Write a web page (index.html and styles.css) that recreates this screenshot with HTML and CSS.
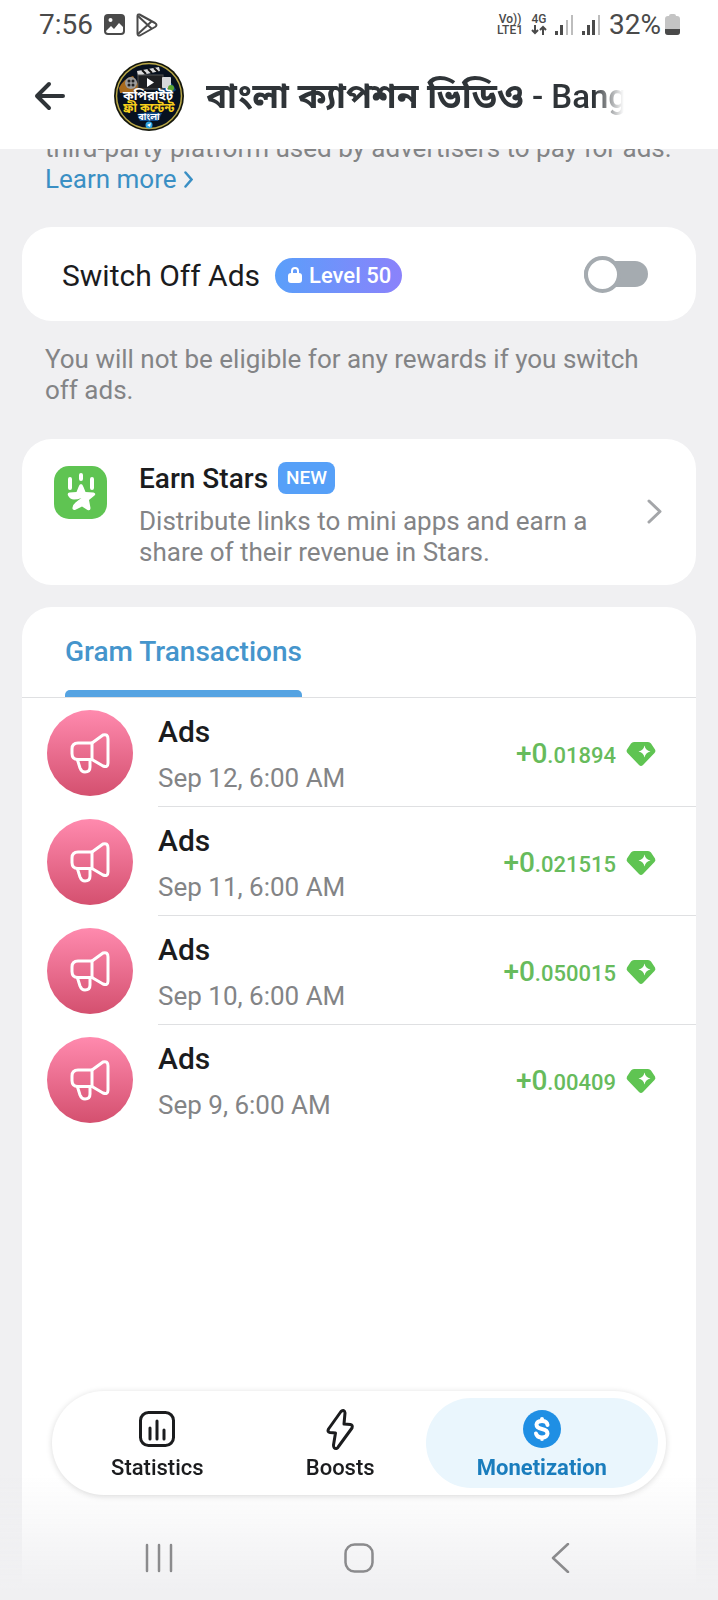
FILE: index.html
```html
<!DOCTYPE html>
<html lang="en">
<head>
  <meta charset="UTF-8">
  <meta name="viewport" content="width=device-width, initial-scale=1.0">
  <title>Channel Monetization</title>
  <link rel="stylesheet" href="styles.css">
</head>
<body>
  <!-- shared icons -->
  <svg class="defs" aria-hidden="true">
    <symbol id="megaphone" viewBox="0 0 86 86">
      <g fill="none" stroke="#fff" stroke-width="3" stroke-linejoin="round" stroke-linecap="round">
        <path d="M45 33H31q-6 0-6 6v4.500q0 6 6 6H45z"/>
        <path d="M45 33L56 25q5-1.500 5 4V53q0 5-5 3L45 49.500"/>
        <path d="M30.500 50L33 58q1.500 4 5 4 5 0 5-5V50"/>
      </g>
    </symbol>
    <symbol id="gem" viewBox="0 0 30 26">
      <path d="M8 1h14q2 0 3 1.500l4 6q1 2-.5 3.500L17 24q-2 2-4 0L1.500 12Q0 10.500 1 8.500l4-6Q6 1 8 1z" fill="#5fc452"/>
      <path d="M18.500 4.500q1 5 6 6-5 1-6 6-1-5-6-6 5-1 6-6z" fill="#fff"/>
    </symbol>
  </svg>

  <div class="top">
    <div class="status">
      <span class="clock">7:56</span>
      <svg width="21" height="21" viewBox="0 0 21 21">
        <rect width="21" height="21" rx="4" fill="#4a4a4a"/>
        <circle cx="6.500" cy="6" r="2" fill="#fff"/>
        <path d="M2 17l5-5 3 3 5-6 4 4v4q0 2-2 2H4q-2 0-2-2z" fill="#fff"/>
      </svg>
      <svg width="22" height="24" viewBox="0 0 22 24" fill="none" stroke="#4a4a4a" stroke-width="2" stroke-linejoin="round">
        <path d="M1.500 3q0-2 2-1.500L19 10q3 2 0 4L4 22.500q-2.500.5-2.500-2z"/>
        <path d="M2 3l14 13M2 21L16 8"/>
      </svg>
      <div class="status-right">
        <span class="net"><span>Vo))</span><span>LTE1</span></span>
        <span class="net">
          <span>4G</span>
          <svg width="16" height="10" viewBox="0 0 16 10" fill="none" stroke="#4a4a4a" stroke-width="2"><path d="M4 0v8M1 5l3 3 3-3M12 10V2M9 5l3-3 3 3"/></svg>
        </span>
        <svg class="signal" width="19" height="20" viewBox="0 0 19 20">
          <path d="M0 16h3v4H0zM5 10h3v10H5z" fill="#4a4a4a"/><path d="M11 5h2v15h-2zM16 0h2v20h-2z" fill="#bdbdbd"/>
        </svg>
        <svg class="signal" width="19" height="20" viewBox="0 0 19 20">
          <path d="M0 16h3v4H0zM5 10h3v10H5zM10 5h3v15h-3z" fill="#4a4a4a"/><path d="M16 0h2v20h-2z" fill="#bdbdbd"/>
        </svg>
        <span class="battery">32%
          <svg width="15" height="21" viewBox="0 0 15 21">
            <path d="M4 2q0-2 2-2h3q2 0 2 2h1q3 0 3 3v13q0 3-3 3H3q-3 0-3-3V5q0-3 3-3z" fill="#c4c4c4"/>
            <path d="M0 15h15v3q0 3-3 3H3q-3 0-3-3z" fill="#4a4a4a"/>
          </svg>
        </span>
      </div>
    </div>

    <header class="header">
      <button class="back" aria-label="Back">
        <svg width="32" height="30" viewBox="0 0 32 30" fill="none" stroke="#2f3438" stroke-width="4" stroke-linecap="round" stroke-linejoin="round"><path d="M29 15H3M15 3L3 15l12 12"/></svg>
      </button>
      <svg class="channel-photo" width="70" height="70" viewBox="0 0 70 70">
        <circle cx="35" cy="35" r="35" fill="#15170c"/>
        <circle cx="35" cy="35" r="32.500" fill="#07111f" stroke="#b9a848" stroke-width="1.500"/>
        <path d="M5 27q5-10 14-12l8 12-9 5H6z" fill="#a86a1c"/>
        <path d="M48 17q10 3 14 12l-5 4-12-2z" fill="#12467c"/>
        <path d="M23 53q12-3 25-1l-4 8H26z" fill="#124c8a"/>
        <path d="M23 10l22-4 1 4-22 5z" fill="#ddd"/>
        <path d="M28 9l4 4M34 8l4 4M40 7l4 4" stroke="#111" stroke-width="2"/>
        <rect x="24" y="14" width="25" height="14" fill="#1f2022" stroke="#555"/>
        <path d="M33 17v9l7-4.500z" fill="#fff"/>
        <circle cx="17" cy="22" r="6" fill="#9b9b9b"/>
        <g fill="#222"><circle cx="15" cy="20" r="1.500"/><circle cx="19" cy="20" r="1.500"/><circle cx="15" cy="24" r="1.500"/><circle cx="19" cy="24" r="1.500"/></g>
        <rect x="48" y="16" width="9" height="11" rx="1" fill="#d6d8da"/>
        <circle cx="57" cy="27" r="3" fill="#5aa832"/>
        <text x="34" y="39" class="photo-text" fill="#fff" font-size="13">কপিরাইট</text>
        <text x="35" y="51" class="photo-text" fill="#f7cf1b" font-size="12">ফ্রী কন্টেন্ট</text>
        <text x="35" y="59" class="photo-text" fill="#fff" font-size="9">বাংলা</text>
        <circle cx="35" cy="64" r="3.500" fill="#2ba3e0"/>
        <path d="M33 64l4-2-1 4z" fill="#fff"/>
      </svg>
      <h1 class="title"><b>বাংলা ক্যাপশন ভিডিও</b> - Bang</h1>
    </header>
  </div>

  <main class="content">
    <p class="note note-top">third-party platform used by advertisers to pay for ads.
      <a class="learn" href="#">Learn more <svg width="9" height="17" viewBox="0 0 9 17" fill="none" stroke="#3a8fc4" stroke-width="2.500" stroke-linecap="round"><path d="M1.500 1.500l6 7-6 7"/></svg></a>
    </p>

    <section class="card switch-card">
      <label for="adsOff">Switch Off Ads</label>
      <span class="level">
        <svg width="14" height="18" viewBox="0 0 14 18"><path d="M4 8V5q0-3 3-3t3 3v3" fill="none" stroke="#fff" stroke-width="2"/><rect y="7" width="14" height="10" rx="3" fill="#fff"/></svg>
        Level 50
      </span>
      <input class="switch" type="checkbox" id="adsOff">
    </section>

    <p class="note note-ads">You will not be eligible for any rewards if you switch off ads.</p>

    <a class="card earn" href="#">
      <svg class="earn-icon" width="53" height="53" viewBox="0 0 53 53">
        <rect width="53" height="53" rx="15" fill="#5fc452"/>
        <path d="M16 13v9M27 9v4M38 13v9" stroke="#fff" stroke-width="4" stroke-linecap="round"/>
        <path d="M27 18q1.500 0 2.500 3l2 5 8 .5q3 1 1 3L35 34l1.500 8q0 3-3 2L28 40.500 21 44q-3 .5-2.500-2.500.5-3 3-5 3-2.500 6-4.500-4 1.500-7.500 1.500-4 0-6-4-1-2.500 1.500-3l7-.5 2-5q1-3 2.500-3z" fill="#fff"/>
      </svg>
      <div class="earn-text">
        <h2>Earn Stars <span class="new">NEW</span></h2>
        <p>Distribute links to mini apps and earn a share of their revenue in Stars.</p>
      </div>
      <svg class="chevron" width="15" height="25" viewBox="0 0 15 25" fill="none" stroke="#a4a6a9" stroke-width="3" stroke-linecap="round" stroke-linejoin="round"><path d="M2 2l11 10.500L2 23"/></svg>
    </a>

    <section class="card transactions">
      <div class="tabs">
        <button class="tab">Gram Transactions</button>
      </div>
      <ul>
        <li>
          <svg class="ads-icon"><use href="#megaphone"/></svg>
          <div class="row">
            <div><h3>Ads</h3><time>Sep 12, 6:00 AM</time></div>
            <span class="amount">+0<small>.01894</small></span>
            <svg class="gem"><use href="#gem"/></svg>
          </div>
        </li>
        <li>
          <svg class="ads-icon"><use href="#megaphone"/></svg>
          <div class="row">
            <div><h3>Ads</h3><time>Sep 11, 6:00 AM</time></div>
            <span class="amount">+0<small>.021515</small></span>
            <svg class="gem"><use href="#gem"/></svg>
          </div>
        </li>
        <li>
          <svg class="ads-icon"><use href="#megaphone"/></svg>
          <div class="row">
            <div><h3>Ads</h3><time>Sep 10, 6:00 AM</time></div>
            <span class="amount">+0<small>.050015</small></span>
            <svg class="gem"><use href="#gem"/></svg>
          </div>
        </li>
        <li>
          <svg class="ads-icon"><use href="#megaphone"/></svg>
          <div class="row">
            <div><h3>Ads</h3><time>Sep 9, 6:00 AM</time></div>
            <span class="amount">+0<small>.00409</small></span>
            <svg class="gem"><use href="#gem"/></svg>
          </div>
        </li>
      </ul>
    </section>
  </main>

  <div class="bottom">
    <nav class="nav">
      <a href="#">
        <svg width="40" height="44" viewBox="0 0 40 44" fill="none" stroke="#1b1c1e" stroke-width="3" stroke-linecap="round"><rect x="3.500" y="5.500" width="33" height="33" rx="8"/><path d="M13 21v11M20 14v18M27 23v9"/></svg>
        Statistics
      </a>
      <a href="#">
        <svg width="40" height="44" viewBox="0 0 40 44" fill="none" stroke="#1b1c1e" stroke-width="3" stroke-linejoin="round"><path d="M21 4.500L8.500 22q-1.500 3 1.500 3.500l5.500.5-2 12q0 4 3 3.500 1.500-.5 2-2L32 21q1-3-1.500-3.500L24 17l1-11q-.5-4-4-1.500z"/></svg>
        Boosts
      </a>
      <a class="active" href="#">
        <svg width="40" height="44" viewBox="0 0 40 44"><circle cx="20" cy="22" r="19" fill="#1f8fe4"/><path d="M25.500 18q-.5-4-5.500-4t-5.500 3.500q0 3.500 5.500 4.500t5.500 4.500q-.5 4-5.500 4t-6-4M20 13v-1M20 31v1" fill="none" stroke="#fff" stroke-width="4" stroke-linecap="round"/></svg>
        Monetization
      </a>
    </nav>
    <div class="system">
      <button aria-label="Recents"><svg width="30" height="30" viewBox="0 0 30 30" fill="none" stroke="#8b8b8d" stroke-width="2.500" stroke-linecap="round"><path d="M3 2v26M15 2v26M27 2v26"/></svg></button>
      <button aria-label="Home"><svg width="30" height="30" viewBox="0 0 30 30" fill="none" stroke="#8b8b8d" stroke-width="2.500"><rect x="1.500" y="1.500" width="27" height="27" rx="9"/></svg></button>
      <button aria-label="Back"><svg width="30" height="30" viewBox="0 0 30 30" fill="none" stroke="#8b8b8d" stroke-width="2.500" stroke-linecap="round" stroke-linejoin="round"><path d="M24 1L9 15l15 14"/></svg></button>
    </div>
  </div>
</body>
</html>
```

FILE: styles.css
```css
* { box-sizing: border-box; }
body { margin: 0; min-height: 100vh; display: flex; flex-direction: column; background: #f0f0f2; color: #1b1c1e; font-family: Roboto, "Noto Sans Bengali", sans-serif; }
h1, h2, h3, p, ul { margin: 0; padding: 0; }
h1, h2, h3 { font-weight: 500; }
a { text-decoration: none; color: inherit; }
button { border: none; background: none; padding: 0; font: inherit; cursor: pointer; }
svg { display: block; flex: none; }
.defs { display: none; }

/* status bar and header */
.top { position: sticky; top: 0; z-index: 2; background: #fff; }
.status { display: flex; align-items: center; gap: 11px; height: 49px; padding: 0 38px 0 39px; color: #4a4a4a; font-size: 28px; line-height: 32px; }
.battery { display: flex; align-items: center; gap: 4px; }
.status-right { display: flex; align-items: center; gap: 8px; margin-left: auto; }
.net { display: flex; flex-direction: column; align-items: center; font-size: 12px; line-height: 11px; font-weight: 500; }
.header { display: flex; align-items: center; height: 100px; padding: 0 94px 6px 34px; }
.back { margin-right: 48px; }
.channel-photo { margin-right: 22px; }
.photo-text { font-family: "Noto Sans Bengali", Roboto, sans-serif; font-weight: 700; text-anchor: middle; }
.title { flex: 1; min-width: 0; padding-top: 2px; overflow: hidden; white-space: nowrap; font-size: 33px; line-height: 60px; color: #2f3438; -webkit-mask-image: linear-gradient(to left, transparent, #000 30px); mask-image: linear-gradient(to left, transparent, #000 30px); }
.title b { font-size: 35px; font-weight: 700; }

.content { flex: 1; display: flex; flex-direction: column; padding: 0 22px; }
.note { padding: 0 23px; color: #838486; font-size: 26px; line-height: 31px; }
.note-top { margin: -16px 0 32px; }
.note-ads { margin: 23px 0 33px; }
.learn { display: flex; align-items: center; gap: 7px; color: #3a8fc4; }
.card { background: #fff; border-radius: 30px; }

.switch-card { display: flex; align-items: center; height: 94px; padding: 2px 48px 0 40px; font-size: 30px; }
.level { display: flex; align-items: center; gap: 7px; height: 35px; margin-left: 15px; padding: 0 11px 0 13px; border-radius: 18px; background: linear-gradient(to right, #5a9ffa, #8b82fb); color: #fff; font-size: 22px; font-weight: 500; }
.switch { appearance: none; display: flex; align-items: center; width: 64px; height: 26px; margin: 0 0 2px auto; background: #a5abb0; border-radius: 13px; }
.switch::before { content: ""; box-sizing: border-box; flex: none; width: 37px; height: 37px; border: 4px solid #a5abb0; border-radius: 50%; background: #fff; }
.switch:checked::before { margin-left: auto; }

.earn { display: flex; min-height: 146px; padding: 22px 34px 17px 32px; margin-bottom: 22px; }
.earn-icon { margin: 5px 32px 0 0; }
.earn-text { flex: 1; }
.earn h2 { display: flex; align-items: center; gap: 10px; height: 34px; margin-bottom: 11px; font-size: 28px; }
.new { padding: 0 8px; border-radius: 8px; background: #56a0f8; color: #fff; font-size: 19px; line-height: 32px; }
.earn p { max-width: 460px; color: #838486; font-size: 26px; line-height: 31px; }
.chevron { align-self: center; margin-bottom: 6px; }

.transactions { flex: 1; border-radius: 30px 30px 0 0; padding-bottom: 220px; }
.tabs { display: flex; height: 91px; padding: 0 43px; border-bottom: 1px solid #dfe0e2; }
.tab { display: flex; flex-direction: column; justify-content: flex-end; height: 90px; color: #4595cc; font-size: 28px; line-height: 34px; font-weight: 500; }
.tab::after { content: ""; width: 100%; height: 7px; margin-top: 21px; border-radius: 5px 5px 0 0; background: #55a3e2; }
.transactions ul { list-style: none; }
.transactions li { display: flex; align-items: center; padding-left: 25px; }
.ads-icon { width: 86px; height: 86px; margin-right: 25px; border-radius: 50%; background: linear-gradient(#ff8aae, #d4506f); }
.row { flex: 1; display: flex; align-items: center; height: 109px; padding: 3px 40px 0 0; border-bottom: 1px solid #dfe0e2; }
li:last-child .row { border-bottom-color: transparent; }
.row h3 { font-size: 30px; line-height: 36px; margin-bottom: 13px; }
.row time { display: block; color: #838486; font-size: 26px; line-height: 31px; }
.amount { margin-left: auto; color: #67bb5c; font-size: 28px; font-weight: 500; }
.amount small { font-size: 22px; }
.gem { width: 30px; height: 26px; margin-left: 10px; }

/* floating navigation */
.bottom { position: fixed; left: 0; right: 0; bottom: 0; padding: 0 52px; background: linear-gradient(transparent 40%, #f0f0f2 95%); }
.nav { display: flex; height: 104px; padding: 7px 8px; border-radius: 52px; background: #fff; box-shadow: 0 1px 6px rgba(0, 0, 0, .15); }
.nav a { flex: 1 0 auto; display: flex; flex-direction: column; align-items: center; padding: 9px 50px 0; border-radius: 45px; font-size: 22px; line-height: 34px; font-weight: 500; }
.nav .active { background: #eaf6fd; color: #1a7dbd; font-weight: 700; }
.system { display: flex; justify-content: space-between; height: 105px; padding: 48px 92px 0; }
.system button { height: 30px; }
```
